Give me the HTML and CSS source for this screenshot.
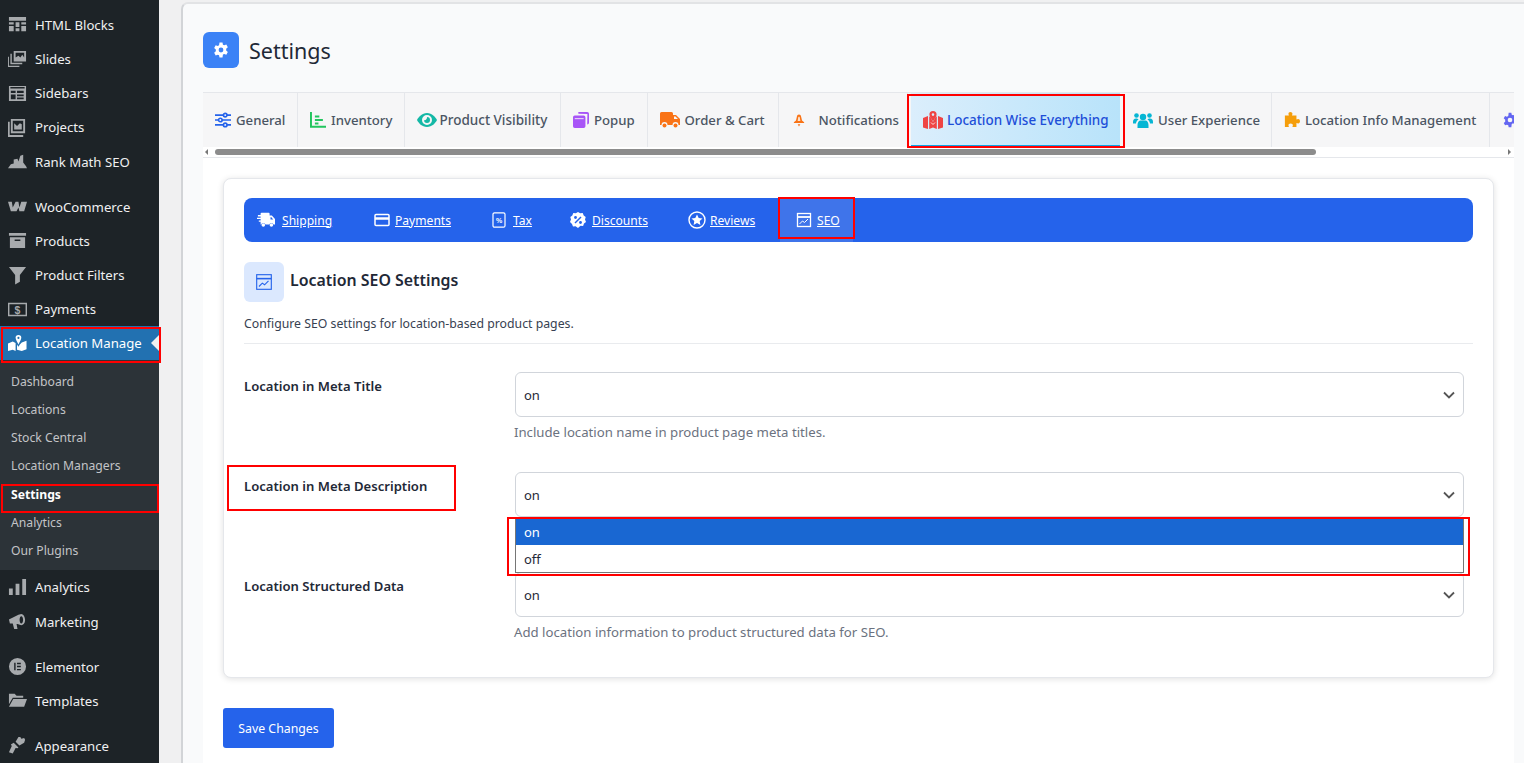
FILE: index.html
```html
<!DOCTYPE html>
<html lang="en">
<head>
<meta charset="utf-8">
<title>Settings</title>
<link rel="stylesheet" href="styles.css">
</head>
<body>
<div class="app">
  <nav class="side">
    <div class="mi"><svg class="si" viewBox="0 0 20 20"><path d="M1 2h18v4H1zM1 7.500h5v2.500H1zM8 7.500h4v5H8zM14 7.500h5v2.500h-5zM1 11.500h5v5.500H1zM14 11.500h5v5.500h-5zM8 14h4v3H8z"/></svg><span>HTML Blocks</span></div>
    <div class="mi"><svg class="si" viewBox="0 0 20 20"><path d="M6 1h13v11H6zM8 8l3-2 2 2 2-3 2 3V3H8zM4 4v9.500h11V15H2.500V4zM1 7v9.500h11V18H0V7z" fill-rule="evenodd"/></svg><span>Slides</span></div>
    <div class="mi"><svg class="si" viewBox="0 0 20 20"><path fill-rule="evenodd" d="M1 2h18v16H1zM2.500 3.200V4.800h15V3.200zM3 7v2.500h5V7zM9.500 7v2.500h7V7zM3 11v5h5v-5zM9.500 11v2h7v-2zM9.500 14.300v1.700h7v-1.700z"/></svg><span>Sidebars</span></div>
    <div class="mi"><svg class="si" viewBox="0 0 20 20"><path fill-rule="evenodd" d="M3 1h15v15H3zM5 3v11h11V3zM6.500 12V5.500l3 3 3-3 2 1V12zM0 4h1.800v14H16v2H0z"/></svg><span>Projects</span></div>
    <div class="mi"><svg class="si" viewBox="0 0 20 20"><path d="M0 17l3-4 3-1V8l4-1 1 3 2-6 3-1v8l3 4 1 2z"/></svg><span>Rank Math SEO</span></div>
    <div class="gap"></div>
    <div class="mi"><svg class="si" viewBox="0 0 20 20"><path d="M0 5h4l1 6 3-6h3l1 6 2-6h6l-3 10h-5l-1-4-2 4H3z"/></svg><span>WooCommerce</span></div>
    <div class="mi"><svg class="si" viewBox="0 0 20 20"><path d="M1 2h18v3H1zM2 6.500h16V18H2zM7 9v1.500h6V9z" fill-rule="evenodd"/></svg><span>Products</span></div>
    <div class="mi"><svg class="si" viewBox="0 0 20 20"><path d="M1 1h18l-6.500 8.500v7l-5 3V9.500z"/></svg><span>Product Filters</span></div>
    <div class="mi"><svg class="si" viewBox="0 0 20 20"><path fill-rule="evenodd" d="M0 3h20v14H0zM1.500 4.500v11h17v-11z"/><text x="10" y="14.500" class="dollar">$</text></svg><span>Payments</span></div>
    <div class="mi mi-active"><svg class="si" viewBox="0 0 20 20"><path d="M0 10l5-2 3 1.500V18l-3-1.500L0 18zM9.500 11l1.500 2.500 1.500-2.500 2-2 5-2v9l-5 2-5-1.500z"/><path fill-rule="evenodd" d="M11 1a3 3 0 0 1 3 3C14 6 12 9 11 11 10 9 8 6 8 4a3 3 0 0 1 3-3zM11 3a1.100 1.100 0 1 0 0 2.200A1.100 1.100 0 0 0 11 3z"/></svg><span>Location Manage</span></div>
    <div class="sub">
      <div class="si-row">Dashboard</div>
      <div class="si-row">Locations</div>
      <div class="si-row">Stock Central</div>
      <div class="si-row">Location Managers</div>
      <div class="si-row si-cur">Settings</div>
      <div class="si-row">Analytics</div>
      <div class="si-row">Our Plugins</div>
    </div>
    <div class="mi"><svg class="si" viewBox="0 0 20 20"><path d="M1 11h4v7H1zM8 6h4v12H8zM15 1h4v17h-4z"/></svg><span>Analytics</span></div>
    <div class="mi"><svg class="si" viewBox="0 0 20 20"><path fill-rule="evenodd" d="M1 8l10-5 3-1c2 0 4 3 4 6.500S16 14 14 14l-4-1.500-1 .2L10 18H6.500L5 12 2 12zM14 4.500c-1 0-1.800 1.800-1.800 3.800s.8 3.700 1.800 3.700 1.900-1.700 1.900-3.700S15 4.500 14 4.500z"/></svg><span>Marketing</span></div>
    <div class="gap"></div>
    <div class="mi"><svg class="si" viewBox="0 0 20 20"><path fill-rule="evenodd" d="M10 1a9 9 0 1 1 0 18 9 9 0 0 1 0-18zM6.500 6v8H8V6zM9.500 6v1.500h4V6zM9.500 9.200v1.500h4V9.200zM9.500 12.500V14h4v-1.500z"/></svg><span>Elementor</span></div>
    <div class="mi"><svg class="si" viewBox="0 0 20 20"><path d="M1 3h6l2 2h7v2H5L1 14zM5.500 8.500H20l-3 8H1z"/></svg><span>Templates</span></div>
    <div class="gap"></div>
    <div class="mi"><svg class="si" viewBox="0 0 20 20"><path d="M11 1l2 0 1 2 3-1 1 2-1 3-5 3-4-4zM6 7l5 5-1 1-2-.5-3 6-4-1.500 3-6.500-1-1.500z"/></svg><span>Appearance</span></div>
  </nav>

  <main class="panel">
    <header class="head">
      <div class="head-ic"><svg viewBox="0 0 24 24" width="18" height="18"><path fill="#fff" fill-rule="evenodd" d="M10 2h4l.6 2.900 1.700.9 2.800-1 2 3.500-2.200 1.900v2.600l2.200 1.900-2 3.500-2.800-1-1.700.9L14 22h-4l-.6-2.900-1.700-.9-2.800 1-2-3.500 2.200-1.900v-2.600L2.900 9.200l2-3.500 2.800 1 1.700-.9zM12 8.800a3.200 3.200 0 1 0 0 6.400 3.200 3.200 0 0 0 0-6.400z"/></svg></div>
      <h1>Settings</h1>
    </header>

    <div class="sheet">
      <div class="tabs">
        <div class="tab t1"><svg class="ti" viewBox="0 0 18 18" fill="none" stroke="#2563eb" stroke-width="1.800"><path d="M0 3.500h18M0 9h18M0 14.500h18"/><circle cx="11.500" cy="3.500" r="2" fill="#f6f6f7"/><circle cx="6" cy="9" r="2" fill="#f6f6f7"/><circle cx="11.500" cy="14.500" r="2" fill="#f6f6f7"/></svg>General</div>
        <div class="tab t2"><svg class="ti" viewBox="0 0 18 18" fill="none" stroke="#22c55e" stroke-width="2.200"><path d="M1.100 0v16.500H18M5.500 5h5M5.500 9h9M5.500 13h4"/></svg>Inventory</div>
        <div class="tab t3"><svg class="ti ti-wide" viewBox="0 0 20 16"><path fill="#14b8a6" fill-rule="evenodd" d="M10 1c5 0 8.500 4 10 7-1.500 3-5 7-10 7S1.500 11 0 8c1.500-3 5-7 10-7zm0 2a5 5 0 1 0 0 10 5 5 0 0 0 0-10zm0 2a3 3 0 1 1-3 3c1 .8 3.300-.5 3-3z"/></svg>Product Visibility</div>
        <div class="tab t4"><svg class="ti" viewBox="0 0 18 18"><path fill="#a855f7" d="M6 0h10a2 2 0 0 1 2 2v10a2 2 0 0 1-2 2v-2l.2-9.800L6 2zM2 4h10a2 2 0 0 1 2 2v10a2 2 0 0 1-2 2H2a2 2 0 0 1-2-2V6a2 2 0 0 1 2-2z"/><path d="M2 7.500h10" stroke="#f6f6f7" stroke-width="1"/></svg>Popup</div>
        <div class="tab t5"><svg class="ti ti-wide" viewBox="0 0 20 16"><path fill="#f97316" fill-rule="evenodd" d="M1.500 0h10A1.500 1.500 0 0 1 13 1.500V3h3l4 4v6h-1.500a3 3 0 0 0-6 0h-5a3 3 0 0 0-6 0H0V1.500A1.500 1.500 0 0 1 1.500 0zM14 4.500V7h4l-2.500-2.500z"/><circle cx="4.500" cy="13.500" r="2"  fill="#f97316"/><circle cx="15.500" cy="13.500" r="2" fill="#f97316"/></svg>Order &amp; Cart</div>
        <div class="tab t6"><svg class="ti-bell" viewBox="0 0 14 16"><path fill="#f97316" d="M7 1c1.400 0 2.200 1 2.500 2.500l1 4.500 2.500 2v1H1v-1l2.500-2 1-4.500C4.800 2 5.600 1 7 1z"/><path fill="#fde2cc" d="M7 3.500c.6 0 1 .5 1 1.500l.6 3.500H5.400L6 5c0-1 .4-1.500 1-1.500z"/><path fill="#f97316" d="M5.500 12.500h3L7 15z"/></svg>Notifications</div>
        <div class="tab t7"><svg class="ti-map" viewBox="0 0 20 18"><path fill="#ef4444" d="M0 7l5-2v13l-5-1.500zM6.200 5.500l1.300.5c.6 1.500 1.500 3 2.500 5 1-2 1.900-3.500 2.500-5l1.300-.5V18L10 16.500 6.200 18zM15 5l5 2v9.500L15 18z"/><path fill="#ef4444" fill-rule="evenodd" d="M10 0a3.600 3.600 0 0 1 3.600 3.600C13.600 5.800 11.500 8 10 10.500 8.500 8 6.400 5.800 6.400 3.600A3.600 3.600 0 0 1 10 0zm0 2.300a1.300 1.300 0 1 0 0 2.600 1.300 1.300 0 0 0 0-2.600z"/><path d="M8 11.500l2 2 2-2" fill="none" stroke="#fde2e2" stroke-width="1"/></svg>Location Wise Everything</div>
        <div class="tab t8"><svg class="ti ti-wide" viewBox="0 0 20 16"><g fill="#06b6d4"><circle cx="3.500" cy="3.500" r="2.300"/><circle cx="16.500" cy="3.500" r="2.300"/><circle cx="10" cy="5" r="3.200"/><path d="M0 10c0-2 1-3.500 3-3.500 1 0 2 .3 2.500 1-1.500 1-2.300 2.200-2.500 4H0zM20 10c0-2-1-3.500-3-3.500-1 0-2 .3-2.500 1 1.500 1 2.300 2.200 2.500 4h3zM4.500 13c0-2.500 1.500-4.500 3-4.500h5c1.500 0 3 2 3 4.500v3h-11z"/></g></svg>User Experience</div>
        <div class="tab t9"><svg class="ti" viewBox="0 0 18 18"><path fill="#f59e0b" d="M7 0c1.500 0 2.500 1 2.500 2 0 .8-.5 1.300-.5 2h5v4.500c.8 0 1.300-.5 2-.5 1 0 2 1 2 2.500S17 13 16 13c-.7 0-1.200-.5-2-.5V17H9.500c0-.8.5-1.300.5-2 0-1-1-2-2.500-2S5 14 5 15c0 .7.500 1.200.500 2H1V4h4.500c0-.7-.5-1.200-.5-2 0-1 1-2 2-2z"/></svg>Location Info Management</div>
        <div class="tab t10"><svg class="ti" viewBox="0 0 24 24"><path fill="#6366f1" fill-rule="evenodd" d="M10 1h4l.6 3 2 1 2.800-1 2 3.500-2.200 2v3l2.200 2-2 3.500-2.800-1-2 1L14 23h-4l-.6-3-2-1-2.800 1-2-3.500 2.200-2v-3l-2.200-2 2-3.500 2.800 1 2-1zM12 8.500a3.500 3.500 0 1 0 0 7 3.500 3.500 0 0 0 0-7z"/></svg></div>
      </div>
      <div class="hbar">
        <span class="arr arr-l"></span>
        <span class="thumb"></span>
        <span class="arr arr-r"></span>
      </div>

      <div class="body">
        <section class="card">
          <div class="subnav">
            <a class="sn sn1"><svg class="sni sni-w" viewBox="0 0 20 16"><path fill="#fff" fill-rule="evenodd" d="M5 0h8a1 1 0 0 1 1 1v2h2.500L20 7v6h-1.600a2.500 2.500 0 0 0-4.800 0H9.400a2.500 2.500 0 0 0-4.800 0H4v-3H2V8.500h2V7H0V5.500h4V4H1V2.500h3V1a1 1 0 0 1 1-1zM15 5v2.500h3L16 5z"/><circle cx="7" cy="13.500" r="2" fill="#fff"/><circle cx="16" cy="13.500" r="2" fill="#fff"/></svg>Shipping</a>
            <a class="sn sn2"><svg class="sni" viewBox="0 0 16 16" fill="none" stroke="#fff" stroke-width="1.500"><rect x="1" y="2.500" width="14" height="11" rx="1"/><path d="M1 6.500h14" stroke-width="2.500"/></svg>Payments</a>
            <a class="sn sn3"><svg class="sni" viewBox="0 0 16 16"><rect x="2" y=".8" width="12" height="14.400" rx="1.500" fill="none" stroke="#fff" stroke-width="1.200"/><text x="8" y="11" class="pct">%</text></svg>Tax</a>
            <a class="sn sn4"><svg class="sni" viewBox="0 0 16 16"><path fill="#fff" d="M8 0l2.200 1.300 2.500-.2 1 2.300 2 1.500-.7 2.500L16 10l-2 1.500-.9 2.400-2.600-.1L8 16l-2.400-1.700-2.600.1-1-2.400L0 10l1-2.600L.3 4.900l2-1.500 1-2.300 2.500.2z"/><path d="M5 11l6-6" stroke="#2563eb" stroke-width="1.400"/><circle cx="5.500" cy="5.500" r="1.400" fill="#2563eb"/><circle cx="10.500" cy="10.500" r="1.400" fill="#2563eb"/></svg>Discounts</a>
            <a class="sn sn5"><svg class="sni sni-l" viewBox="0 0 18 18"><circle cx="9" cy="9" r="8" fill="none" stroke="#fff" stroke-width="1.400"/><path fill="#fff" d="M9 3.500l1.700 3.500 3.800.5-2.800 2.600.7 3.800L9 12.100l-3.400 1.800.7-3.800L3.500 7.500 7.300 7z"/></svg>Reviews</a>
            <a class="sn sn6"><svg class="sni" viewBox="0 0 16 16" fill="none" stroke="#fff" stroke-width="1.300"><rect x="1.500" y="1.500" width="13" height="13"/><path d="M1.500 5h13" stroke-width="1.800"/><path d="M3.500 12l3-3 2 1.500 3.500-3.500" stroke-width="1"/></svg>SEO</a>
          </div>

          <div class="sec-head">
            <div class="sec-ic"><svg viewBox="0 0 16 16" width="18" height="18" fill="none" stroke="#2563eb" stroke-width="1"><rect x="1.500" y="1.500" width="13" height="13"/><path d="M1.500 5h13" stroke-width="1.400"/><path d="M3.500 12l3-3 2 1.500 3.500-3.500"/></svg></div>
            <h2>Location SEO Settings</h2>
          </div>
          <p class="sec-desc">Configure SEO settings for location-based product pages.</p>

          <div class="rows">
            <div class="row">
              <label class="lbl">Location in Meta Title</label>
              <div class="ctl">
                <div class="sel">on<svg class="chev" viewBox="0 0 12 8"><path d="M1 1.500l5 5 5-5" fill="none" stroke="#555" stroke-width="1.800"/></svg></div>
                <p class="help">Include location name in product page meta titles.</p>
              </div>
            </div>
            <div class="row">
              <label class="lbl">Location in Meta Description</label>
              <div class="ctl">
                <div class="sel">on<svg class="chev" viewBox="0 0 12 8"><path d="M1 1.500l5 5 5-5" fill="none" stroke="#555" stroke-width="1.800"/></svg></div>
                <div class="drop">
                  <div class="opt opt-on">on</div>
                  <div class="opt">off</div>
                </div>
              </div>
            </div>
            <div class="row">
              <label class="lbl">Location Structured Data</label>
              <div class="ctl">
                <div class="sel">on<svg class="chev" viewBox="0 0 12 8"><path d="M1 1.500l5 5 5-5" fill="none" stroke="#555" stroke-width="1.800"/></svg></div>
                <p class="help">Add location information to product structured data for SEO.</p>
              </div>
            </div>
          </div>
        </section>
        <button class="save" type="button">Save Changes</button>
      </div>
    </div>
  </main>
</div>
<div class="mark mark-tab"></div>
<div class="mark mark-seo"></div>
<div class="mark mark-lm"></div>
<div class="mark mark-set"></div>
<div class="mark mark-lbl"></div>
<div class="mark mark-drop"></div>
</body>
</html>
```

FILE: styles.css
```css
* { box-sizing: border-box; }
html, body { margin: 0; height: 763px; overflow: hidden; }
body { background: #f0f0f1; font-family: "Noto Sans", "Open Sans", sans-serif; color: #1f2937; position: relative; }
.app { display: flex; height: 763px; overflow: hidden; }

.side { width: 159px; flex: none; background: #1d2327; padding-top: 7.800px; color: #f0f0f1; }
.mi { height: 34.200px; display: flex; align-items: center; padding-left: 8px; gap: 8px; font-size: 13.200px; position: relative; }
.si { width: 19px; height: 19px; fill: #a7aaad; flex: none; }
.gap { height: 10.800px; }
.dollar { font: bold 11px "Liberation Sans", sans-serif; text-anchor: middle; fill: #a7aaad; }
.mi-active { background: #2271b1; color: #fff; }
.mi-active .si { fill: #fff; }
.mi-active::after { content: ""; position: absolute; right: 0; top: 50%; margin-top: -8px; border: 8px solid transparent; border-right-color: #f0f0f1; border-left-width: 0; }
.sub { background: #2c3338; padding: 6.500px 0 6px; }
.si-row { height: 28.200px; display: flex; align-items: center; padding-left: 11px; font-size: 12.200px; color: #c3c4c7; }
.si-cur { color: #fff; font-weight: 700; padding-top: 1px; }

.panel { flex: 1; min-width: 0; margin: 2px 0 0 22px; background: #f9fafb; border-left: 2px solid #d2d4d7; border-top: 2px solid #e2e3e5; border-top-left-radius: 7px; padding: 0 10px 0 20px; display: flex; flex-direction: column; }
.head { display: flex; flex: none; align-items: center; gap: 10px; height: 88px; padding-top: 4px; }
.head-ic { width: 36px; height: 36px; border-radius: 6px; background: #3b82f6; display: flex; align-items: center; justify-content: center; }
h1 { margin: 0; font-size: 21.500px; font-weight: 400; color: #1f2937; padding-top: 1px; }

.sheet { background: #fff; flex: 1; }
.tabs { display: flex; height: 55px; background: #f6f6f7; border-top: 1px solid #e5e7eb; overflow: hidden; }
.tab { flex: none; height: 54px; display: flex; align-items: center; gap: 5px; padding-left: 12px; font-size: 13.200px; font-weight: 500; color: #4b5563; border-right: 1px solid #e5e7eb; }
.ti { width: 16px; height: 16px; flex: none; }
.ti-wide { width: 20px; }
.ti-map { width: 20px; height: 18px; flex: none; }
.ti-bell { width: 12px; height: 15px; flex: none; margin-right: 9px; margin-left: 2px; }
.t1 { width: 94.500px; }
.t2 { width: 107px; padding-left: 12.500px; }
.t3 { width: 156px; gap: 3px; font-size: 13.500px; }
.t4 { width: 87px; padding-left: 12.500px; }
.t5 { width: 131px; }
.t6 { width: 129.500px; }
.t7 { width: 209px; margin-left: 3px; padding-left: 12px; gap: 4px; font-size: 13.450px; color: #1d4ed8; background: linear-gradient(90deg, #dbeefc, #b8e3fa); border-right: 0; box-shadow: inset 0 -2px 0 #0ea5e9; }
.t8 { width: 151.500px; padding-left: 13px; }
.t9 { width: 218px; padding-left: 12.500px; }
.t10 { width: 40px; }

.hbar { height: 11px; display: flex; align-items: center; background: #fff; border-bottom: 1px solid #e5e7eb; padding: 0 3px 1px 0; }
.arr { width: 0; height: 0; border: 3.500px solid transparent; }
.arr-l { border-right-color: #777; border-left-width: 0; margin-left: 2px; }
.arr-r { border-left-color: #777; border-right-width: 0; margin-left: auto; }
.thumb { width: 1101px; height: 6px; background: #8c8c8c; border-radius: 3px; margin-left: 7px; }

.body { padding: 20px 20px 0; }
.card { height: 500px; background: #fff; border: 1px solid #e5e7eb; border-radius: 8px; box-shadow: 0 1px 6px rgba(0,0,0,.12); padding: 19px 20px 0; }
.subnav { height: 44px; background: #2563eb; border-radius: 8px; display: flex; align-items: stretch; }
.sn { flex: none; display: flex; align-items: center; gap: 5px; color: #fff; font-size: 12.100px; text-decoration: underline; }
.sni { width: 16px; height: 16px; flex: none; }
.sni-w { width: 18px; }
.sni-l { width: 18px; height: 18px; }
.pct { font: bold 7px "Liberation Sans", sans-serif; text-anchor: middle; fill: #fff; }
.sn1 { margin-left: 13px; width: 117px; gap: 7px; }
.sn2 { width: 117px; }
.sn3 { width: 79px; gap: 6px; }
.sn4 { width: 118px; gap: 6px; }
.sn5 { width: 92px; gap: 4px; }
.sn6 { padding: 0 13px 0 16px; background: #3f74ea; }

.sec-head { display: flex; align-items: center; gap: 6px; margin-top: 20px; }
.sec-ic { width: 40px; height: 40px; border-radius: 6px; background: #dbe8fe; display: flex; align-items: center; justify-content: center; }
h2 { margin: 0; padding-bottom: 4px; font-size: 15.900px; font-weight: 600; color: #1f2937; }
.sec-desc { margin: 0; padding: 13px 0 0; font-size: 12.270px; color: #374151; border-bottom: 1px solid #e9ebee; line-height: 17px; height: 42px; }

.rows { padding-top: 28px; }
.row { display: grid; grid-template-columns: 270px 1fr; height: 100px; }
.lbl { font-size: 13.100px; font-weight: 600; color: #1f2937; padding-top: 5px; line-height: 18px; }
.ctl { position: relative; }
.sel { width: 949px; height: 45px; margin-left: 1px; border: 1px solid #d1d5db; border-radius: 6px; background: #fff; display: flex; align-items: center; justify-content: space-between; padding: 0 8px; font-size: 13px; color: #1f2937; }
.chev { width: 12px; height: 8px; }
.help { margin: 7px 0 0; font-size: 13.200px; line-height: 17px; color: #6b7280; }
.drop { position: absolute; left: 1px; top: 46px; width: 949px; height: 55px; background: #fff; border: 1px solid #767676; border-top: 0; z-index: 2; }
.opt { height: 27px; padding-left: 8px; font-size: 13px; display: flex; align-items: center; color: #1f2937; }
.opt-on { background: #1967d2; color: #fff; height: 26px; margin-top: 1px; }

.save { display: block; margin-top: 30px; width: 111px; height: 40px; background: #2563eb; color: #fff; border: 0; border-radius: 3px; font: 12.300px "Noto Sans", sans-serif; }

.mark { position: absolute; border: 2px solid #f00; pointer-events: none; z-index: 5; }
.mark-tab { left: 907px; top: 94px; width: 218px; height: 54px; }
.mark-seo { left: 778px; top: 197px; width: 77px; height: 42px; }
.mark-lm { left: 1px; top: 327px; width: 160px; height: 36px; }
.mark-set { left: 1px; top: 484px; width: 158px; height: 29px; }
.mark-lbl { left: 227px; top: 465px; width: 229px; height: 46px; }
.mark-drop { left: 507px; top: 517px; width: 963px; height: 59px; }
```
